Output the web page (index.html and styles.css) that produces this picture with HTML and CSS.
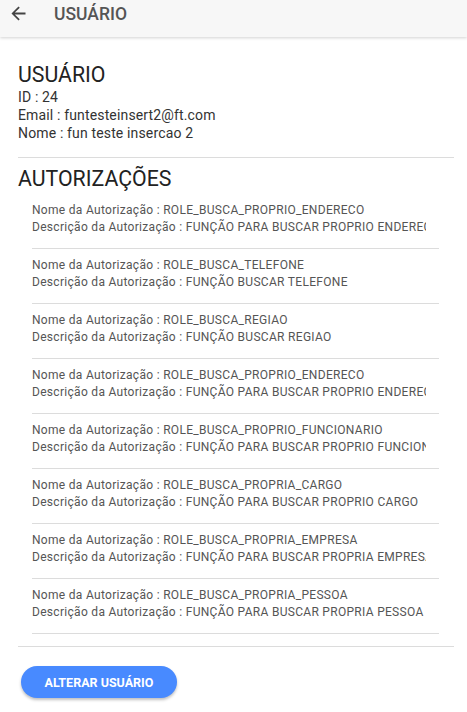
FILE: index.html
```html
<!DOCTYPE html>
<html lang="pt">
<head>
<meta charset="utf-8">
<link rel="stylesheet" href="styles.css">
</head>
<body>
<header class="toolbar">
  <svg class="back" width="21" height="21" viewBox="0 0 512 512"><path d="M427 234.625H167.296l119.702-119.702L256 85 85 256l171 171 29.922-29.924-118.626-119.701H427v-42.75z" fill="#444"/></svg>
  <span class="toolbar-title">USUÁRIO</span>
</header>
<main class="content">
  <section class="user">
    <h2 class="title">USUÁRIO</h2>
    <p class="field">ID : 24</p>
    <p class="field">Email : funtesteinsert2@ft.com</p>
    <p class="field">Nome : fun teste insercao 2</p>
  </section>
  <section class="auths">
    <h2 class="title">AUTORIZAÇÕES</h2>
    <ul class="list">
      <li class="item"><p>Nome da Autorização : ROLE_BUSCA_PROPRIO_ENDERECO</p><p>Descrição da Autorização : FUNÇÃO PARA BUSCAR PROPRIO ENDERECO</p></li>
      <li class="item"><p>Nome da Autorização : ROLE_BUSCA_TELEFONE</p><p>Descrição da Autorização : FUNÇÃO BUSCAR TELEFONE</p></li>
      <li class="item"><p>Nome da Autorização : ROLE_BUSCA_REGIAO</p><p>Descrição da Autorização : FUNÇÃO BUSCAR REGIAO</p></li>
      <li class="item"><p>Nome da Autorização : ROLE_BUSCA_PROPRIO_ENDERECO</p><p>Descrição da Autorização : FUNÇÃO PARA BUSCAR PROPRIO ENDERECO</p></li>
      <li class="item"><p>Nome da Autorização : ROLE_BUSCA_PROPRIO_FUNCIONARIO</p><p>Descrição da Autorização : FUNÇÃO PARA BUSCAR PROPRIO FUNCIONARIO</p></li>
      <li class="item"><p>Nome da Autorização : ROLE_BUSCA_PROPRIA_CARGO</p><p>Descrição da Autorização : FUNÇÃO PARA BUSCAR PROPRIO CARGO</p></li>
      <li class="item"><p>Nome da Autorização : ROLE_BUSCA_PROPRIA_EMPRESA</p><p>Descrição da Autorização : FUNÇÃO PARA BUSCAR PROPRIA EMPRESA</p></li>
      <li class="item"><p>Nome da Autorização : ROLE_BUSCA_PROPRIA_PESSOA</p><p>Descrição da Autorização : FUNÇÃO PARA BUSCAR PROPRIA PESSOA</p></li>
    </ul>
  </section>
  <button class="btn">ALTERAR USUÁRIO</button>
</main>
</body>
</html>
```
FILE: styles.css
```css
* { box-sizing: border-box; }
html, body { margin: 0; padding: 0; }
body {
  font-family: Roboto, "Noto Sans", sans-serif;
  background: #fff;
  color: #222;
  width: 467px;
  height: 712px;
  overflow: hidden;
}
.toolbar {
  height: 37px;
  background: #f7f7f7;
  display: flex;
  align-items: center;
  box-shadow: 0 1px 3px rgba(0,0,0,0.18);
  position: relative;
  z-index: 1;
}
.back { margin-left: 8px; margin-top: -10px; }
.toolbar-title {
  margin-left: 25px;
  margin-top: -10px;
  font-size: 17.5px;
  font-weight: 500;
  color: #555;
}
.content { padding: 26px 13px 0 18px; }
.user { border-bottom: 1px solid #dcdcdc; padding-bottom: 15px; }
.title {
  margin: 0;
  font-size: 21.3px;
  font-weight: 400;
  color: #222;
  line-height: 24px;
}
.field {
  margin: 0;
  font-size: 14px;
  letter-spacing: 0.15px;
  line-height: 18px;
  color: #333;
}
.field:first-of-type { margin-top: 1px; }
.auths { padding-top: 9px; border-bottom: 1px solid #dcdcdc; padding-bottom: 12px; }
.list { list-style: none; margin: 0; padding: 3px 0 0 14px; }
.item {
  width: 407px;
  padding: 8px 13px 12px 0;
  border-bottom: 1px solid #dcdcdc;
  overflow: hidden;
}
.item p {
  margin: 0;
  font-size: 12px;
  letter-spacing: 0.3px;
  line-height: 17px;
  color: #555;
  white-space: nowrap;
  overflow: hidden;
}
.btn {
  display: block;
  margin-top: 19px;
  margin-left: 3px;
  width: 156px;
  height: 32px;
  border: none;
  border-radius: 16px;
  background: #488aff;
  color: #fff;
  font-family: Roboto, sans-serif;
  font-weight: 700;
  font-size: 12.5px;
  box-shadow: 0 2px 3px rgba(0,0,0,0.25);
}
```
